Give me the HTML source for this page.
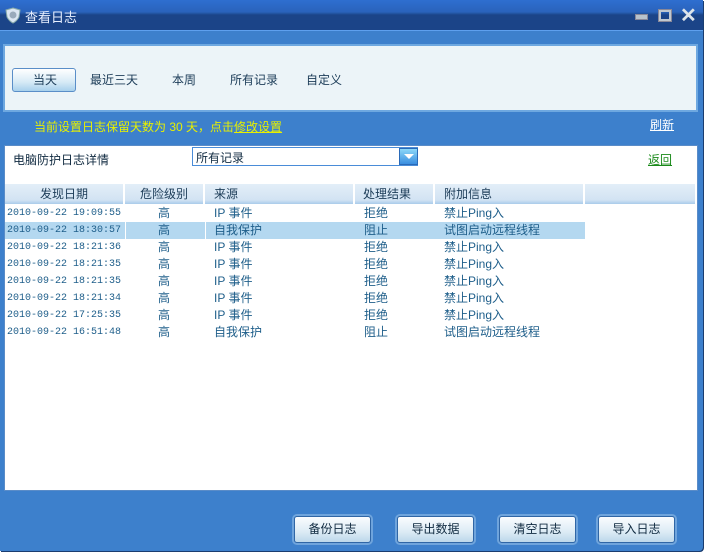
<html><head><style>
body{margin:0;width:707px;height:555px;background:#fff;position:relative;overflow:hidden;font-family:"Liberation Sans","Noto Sans CJK SC",sans-serif;font-size:12px}
.a{position:absolute;white-space:nowrap}
.win{left:0;top:0;width:703px;height:551px;background:#3d80cc;border-radius:0 0 4px 0;box-shadow:1px 1px 0 #1a3d70}
.title{left:0;top:0;width:703px;height:30px;background:linear-gradient(#2e6fd0 0,#2a63bb 12px,#1b4488 15px,#1b4488 100%);border-bottom:1px solid #5ea0ee}
.panel{left:3px;top:44px;width:691px;height:64px;background:#ecf4f8;border:2px solid #6ea8e0}
.tab{top:71px;color:#1c3c58;font-size:12px}
.wb{left:4px;top:145px;width:692px;height:344px;background:#fff;border:1px solid #5a8cc8}
.th{top:184px;height:20px;background:linear-gradient(#e3eef8,#d2e3f3 80%,#a9cbea);color:#1c3c58;font-size:12px;line-height:20px;border-right:2px solid #fff;box-sizing:border-box}
.r{height:17px;line-height:17px;color:#1e5e8a;font-size:12px}
.mono{font-family:"Liberation Mono","Noto Sans CJK SC",monospace;font-size:10px}
.btn{top:516px;width:77px;height:27px;box-sizing:border-box;border:1px solid #2f66a6;border-radius:3px;background:linear-gradient(#fafcfe,#dcebf5 60%,#bcd7ea);box-shadow:0 0 0 2px #6fa4dc;text-align:center;line-height:25px;color:#102a40;font-size:12px}
</style></head><body>
<div class="a win"></div>
<div class="a title"></div>
<svg class="a" style="left:5px;top:7px" width="16" height="17"><path d="M8 1 L15 3 L14 10 Q12 14 8 16 Q4 14 2 10 L1 3Z" fill="#dbe6f2" stroke="#8aa" /><circle cx="8" cy="8" r="3.5" fill="#9ab"/></svg>
<div class="a" style="left:25px;top:7px;color:#e8f0ff;font-size:13px">查看日志</div>
<div class="a" style="left:635px;top:14px;width:11px;height:4px;background:#b8c2cc;border:1px solid #889"></div>
<div class="a" style="left:659px;top:10px;width:8px;height:7px;border:2px solid #c0c8d0;outline:1px solid #889"></div>
<div class="a" style="left:680px;top:3px;color:#dde4ea;font-size:20px;font-weight:bold">✕</div>
<div class="a panel"></div>
<div class="a" style="left:12px;top:68px;width:62px;height:22px;border:1px solid #5a8ec8;border-radius:3px;background:linear-gradient(#fff,#d6eaf6 60%,#a8d0ec)"></div>
<div class="a tab" style="left:33px">当天</div>
<div class="a tab" style="left:90px">最近三天</div>
<div class="a tab" style="left:172px">本周</div>
<div class="a tab" style="left:230px">所有记录</div>
<div class="a tab" style="left:306px">自定义</div>
<div class="a" style="left:34px;top:118px;color:#e8f000;font-size:12px">当前设置日志保留天数为 30 天，点击<u>修改设置</u></div>
<div class="a" style="left:650px;top:116px;color:#fff;font-size:12px;text-decoration:underline">刷新</div>
<div class="a wb"></div>
<div class="a" style="left:13px;top:151px;color:#102a40;font-size:12px">电脑防护日志详情</div>
<div class="a" style="left:192px;top:147px;width:224px;height:17px;border:1px solid #4a8cd8;background:#fff"></div>
<div class="a" style="left:196px;top:149px;color:#102a40;font-size:12px">所有记录</div>
<div class="a" style="left:399px;top:148px;width:17px;height:15px;background:linear-gradient(#8cd8f8,#3a8ee0);border:1px solid #2a6ab8"><div style="margin:5px auto 0;width:0;height:0;border-left:5px solid transparent;border-right:5px solid transparent;border-top:5px solid #fff"></div></div>
<div class="a" style="left:648px;top:151px;color:#1a8a1a;font-size:12px;text-decoration:underline">返回</div>
<div class="a th" style="left:5px;width:120px;padding-left:35px">发现日期</div>
<div class="a th" style="left:125px;width:80px;padding-left:15px">危险级别</div>
<div class="a th" style="left:205px;width:150px;padding-left:9px">来源</div>
<div class="a th" style="left:355px;width:80px;padding-left:8px">处理结果</div>
<div class="a th" style="left:435px;width:150px;padding-left:9px">附加信息</div>
<div class="a th" style="left:585px;width:110px;border-right:0"></div>
<div class="a" style="left:5px;top:222px;width:580px;height:17px;background:linear-gradient(90deg,#b4d8f0 0,#b4d8f0 120px,#fff 120px,#fff 121px,#b4d8f0 121px,#b4d8f0 200px,#fff 200px,#fff 201px,#b4d8f0 201px)"></div>
<div class="a" style="left:0;top:205px">
<div class="a r mono" style="left:7px;top:0">2010-09-22 19:09:55</div><div class="a r" style="left:158px;top:0">高</div><div class="a r" style="left:214px;top:0">IP 事件</div><div class="a r" style="left:364px;top:0">拒绝</div><div class="a r" style="left:444px;top:0">禁止Ping入</div>
<div class="a r mono" style="left:7px;top:17px">2010-09-22 18:30:57</div><div class="a r" style="left:158px;top:17px">高</div><div class="a r" style="left:214px;top:17px">自我保护</div><div class="a r" style="left:364px;top:17px">阻止</div><div class="a r" style="left:444px;top:17px">试图启动远程线程</div>
<div class="a r mono" style="left:7px;top:34px">2010-09-22 18:21:36</div><div class="a r" style="left:158px;top:34px">高</div><div class="a r" style="left:214px;top:34px">IP 事件</div><div class="a r" style="left:364px;top:34px">拒绝</div><div class="a r" style="left:444px;top:34px">禁止Ping入</div>
<div class="a r mono" style="left:7px;top:51px">2010-09-22 18:21:35</div><div class="a r" style="left:158px;top:51px">高</div><div class="a r" style="left:214px;top:51px">IP 事件</div><div class="a r" style="left:364px;top:51px">拒绝</div><div class="a r" style="left:444px;top:51px">禁止Ping入</div>
<div class="a r mono" style="left:7px;top:68px">2010-09-22 18:21:35</div><div class="a r" style="left:158px;top:68px">高</div><div class="a r" style="left:214px;top:68px">IP 事件</div><div class="a r" style="left:364px;top:68px">拒绝</div><div class="a r" style="left:444px;top:68px">禁止Ping入</div>
<div class="a r mono" style="left:7px;top:85px">2010-09-22 18:21:34</div><div class="a r" style="left:158px;top:85px">高</div><div class="a r" style="left:214px;top:85px">IP 事件</div><div class="a r" style="left:364px;top:85px">拒绝</div><div class="a r" style="left:444px;top:85px">禁止Ping入</div>
<div class="a r mono" style="left:7px;top:102px">2010-09-22 17:25:35</div><div class="a r" style="left:158px;top:102px">高</div><div class="a r" style="left:214px;top:102px">IP 事件</div><div class="a r" style="left:364px;top:102px">拒绝</div><div class="a r" style="left:444px;top:102px">禁止Ping入</div>
<div class="a r mono" style="left:7px;top:119px">2010-09-22 16:51:48</div><div class="a r" style="left:158px;top:119px">高</div><div class="a r" style="left:214px;top:119px">自我保护</div><div class="a r" style="left:364px;top:119px">阻止</div><div class="a r" style="left:444px;top:119px">试图启动远程线程</div>
</div>
<div class="a btn" style="left:294px">备份日志</div>
<div class="a btn" style="left:397px">导出数据</div>
<div class="a btn" style="left:499px">清空日志</div>
<div class="a btn" style="left:598px">导入日志</div>
</body></html>
